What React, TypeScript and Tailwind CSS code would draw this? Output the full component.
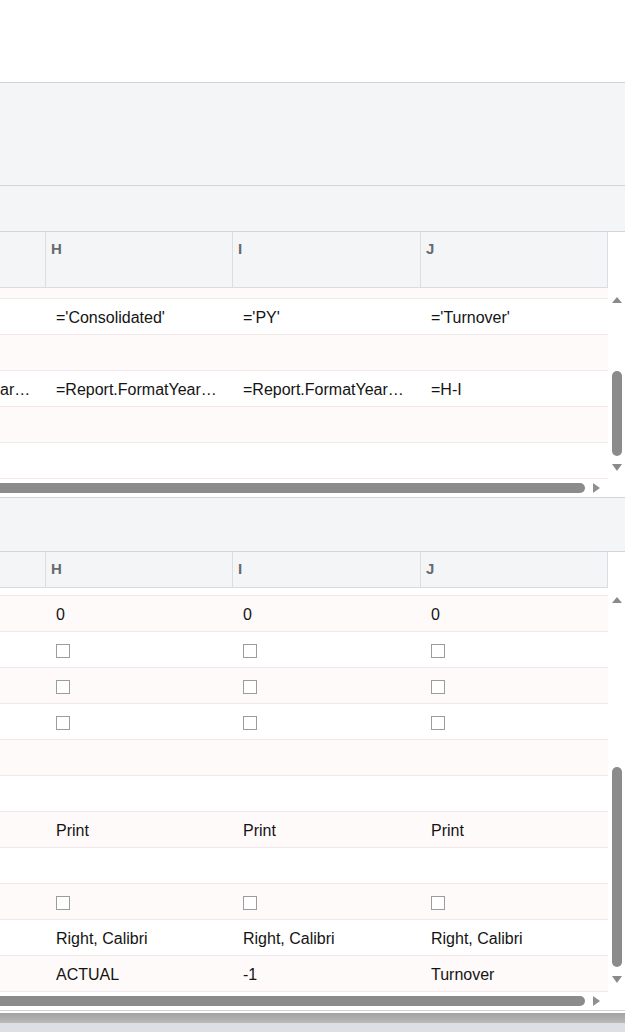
import React from "react";

const COLS = "grid grid-cols-[46px_187px_188px_187px]";

type Cell = string | { cb: true } | null;

function Checkbox() {
  return <div className="w-[14px] h-[14px] border-[1.5px] border-[#9c9c9c] bg-white" />;
}

function HeaderRow({ tall }: { tall: boolean }) {
  return (
    <div className="flex">
      <div
        className={`${COLS} w-[608px] bg-[#f4f5f7] border-b border-[#d9dbde] ${tall ? "h-[56px]" : "h-[36px]"}`}
      >
        {["", "H", "I", "J"].map((l, i) => (
          <div
            key={i}
            className="border-r border-[#dcdee1] pl-[5px] pt-[9px] text-[15px] leading-4 font-bold text-[#666a71]"
          >
            {l}
          </div>
        ))}
      </div>
      <div className="flex-1 bg-white" />
    </div>
  );
}

function Row({ cells, pink }: { cells: Cell[]; pink: boolean }) {
  return (
    <div
      className={`${COLS} h-[36px] items-center border-b border-[#f3e6e8] ${pink ? "bg-[#fffafa]" : "bg-white"}`}
    >
      {cells.map((c, i) => (
        <div
          key={i}
          className={`${i === 0 ? "pl-0" : "pl-[10px]"} pt-[2px] whitespace-nowrap overflow-hidden text-[16px] text-[#141414] leading-5`}
        >
          {c === null ? null : typeof c === "string" ? c : <Checkbox />}
        </div>
      ))}
    </div>
  );
}

function HScroll() {
  return (
    <div className="h-[18px] flex items-center bg-white">
      <div className="w-[585px] h-[10px] rounded-r-full bg-[#8b8b8b]" />
      <div className="ml-[8px] w-0 h-0 border-y-[5px] border-y-transparent border-l-[7px] border-l-[#8f8f8f]" />
    </div>
  );
}

function VScroll({ gapTop, thumb, gapBottom }: { gapTop: number; thumb: number; gapBottom: number }) {
  return (
    <div className="w-[17px] bg-white flex flex-col">
      <div className="h-[9px]" />
      <div className="ml-[4px] w-0 h-0 border-x-[5px] border-x-transparent border-b-[6px] border-b-[#8a8a8a]" />
      <div style={{ height: gapTop }} />
      <div className="ml-[4px] w-[10px] rounded-full bg-[#8b8b8b]" style={{ height: thumb }} />
      <div style={{ height: gapBottom }} />
      <div className="ml-[4px] w-0 h-0 border-x-[5px] border-x-transparent border-t-[7px] border-t-[#8a8a8a]" />
    </div>
  );
}

export default function App() {
  const cb = { cb: true as const };
  const e: Cell[] = [null, null, null, null];
  const top: Cell[][] = [
    [null, "='Consolidated'", "='PY'", "='Turnover'"],
    e,
    ["ar…", "=Report.FormatYear…", "=Report.FormatYear…", "=H-I"],
    e,
    e,
  ];
  const bottom: Cell[][] = [
    [null, "0", "0", "0"],
    [null, cb, cb, cb],
    [null, cb, cb, cb],
    [null, cb, cb, cb],
    e,
    e,
    [null, "Print", "Print", "Print"],
    e,
    [null, cb, cb, cb],
    [null, "Right, Calibri", "Right, Calibri", "Right, Calibri"],
    [null, "ACTUAL", "-1", "Turnover"],
  ];

  return (
    <div className="w-[625px] h-[1032px] overflow-hidden bg-white font-['Liberation_Sans',Arial,sans-serif] flex flex-col">
      <div className="h-[82px] bg-white" />
      <div className="h-[103px] border-t border-[#d3d5d8] bg-[#f4f5f7]" />
      <div className="h-[47px] border-y border-[#d3d5d8] bg-[#f4f5f7]" />
      <HeaderRow tall />
      <div className="flex h-[191px]">
        <div className="w-[608px] flex flex-col">
          <div className="h-[11px] bg-[#fffafa] border-b border-[#f3e6e8]" />
          {top.map((r, i) => (
            <Row key={i} cells={r} pink={i % 2 === 1} />
          ))}
        </div>
        <VScroll gapTop={68} thumb={85} gapBottom={8} />
      </div>
      <HScroll />
      <div className="h-[55px] border-y border-[#d3d5d8] bg-[#f4f5f7]" />
      <HeaderRow tall={false} />
      <div className="flex h-[404px]">
        <div className="w-[608px] flex flex-col">
          <div className="h-[8px] bg-white border-b border-[#f3e6e8]" />
          {bottom.map((r, i) => (
            <Row key={i} cells={r} pink={i % 2 === 0} />
          ))}
        </div>
        <VScroll gapTop={164} thumb={200} gapBottom={9} />
      </div>
      <HScroll />
      <div className="h-[3px] border-t border-[#d3d5d8] bg-white" />
      <div className="h-[19px] flex flex-col">
        <div className="h-[10px] bg-gradient-to-b from-[#a2a2a2] to-[#b9b9b9]" />
        <div className="flex-1 bg-[#dcdfe4]" />
      </div>
    </div>
  );
}
